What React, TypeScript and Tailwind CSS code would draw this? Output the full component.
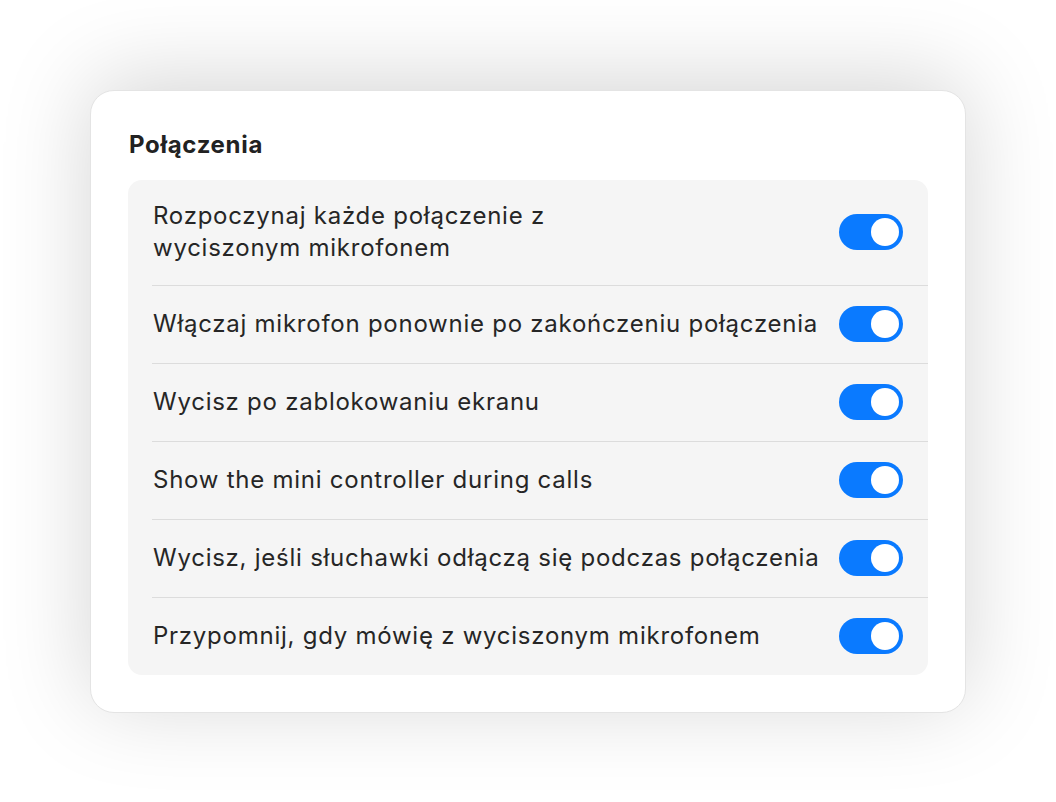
import React from "react";

const rows: React.ReactNode[] = [
  <>
    Rozpoczynaj każde połączenie z
    <br />
    wyciszonym mikrofonem
  </>,
  "Włączaj mikrofon ponownie po zakończeniu połączenia",
  "Wycisz po zablokowaniu ekranu",
  "Show the mini controller during calls",
  "Wycisz, jeśli słuchawki odłączą się podczas połączenia",
  "Przypomnij, gdy mówię z wyciszonym mikrofonem",
];

function Toggle() {
  return (
    <div className="relative h-[36px] w-[64px] shrink-0 rounded-full bg-[#0a7aff]">
      <div className="absolute right-[4px] top-[4px] h-[28px] w-[28px] rounded-full bg-white" />
    </div>
  );
}

export default function App() {
  return (
    <div
      className="flex h-[802px] w-full items-center justify-center bg-white"
      style={{ fontFamily: "Inter, 'Noto Sans', sans-serif" }}
    >
      <div className="w-[876px] rounded-[24px] border border-[#e4e4e4] bg-white px-[37px] pb-[37px] pt-[38px] shadow-[0_-10px_90px_rgba(0,0,0,0.17)]">
        <h2 className="mb-[19px] pl-[1px] text-[24px] font-bold leading-[32px] tracking-[0.7px] text-[#222222]">
          Połączenia
        </h2>
        <div className="overflow-hidden rounded-[14px] bg-[#f5f5f5]">
          {rows.map((r, i) => (
            <div key={i}>
              {i > 0 && <div className="ml-[24px] h-px bg-[#dcdcdc]" />}
              <div className="flex items-center justify-between py-[20.5px] pl-[25px] pr-[25px]">
                <div className="text-[24px] leading-[32px] tracking-[0.75px] text-[#262626]">{r}</div>
                <Toggle />
              </div>
            </div>
          ))}
        </div>
      </div>
    </div>
  );
}
